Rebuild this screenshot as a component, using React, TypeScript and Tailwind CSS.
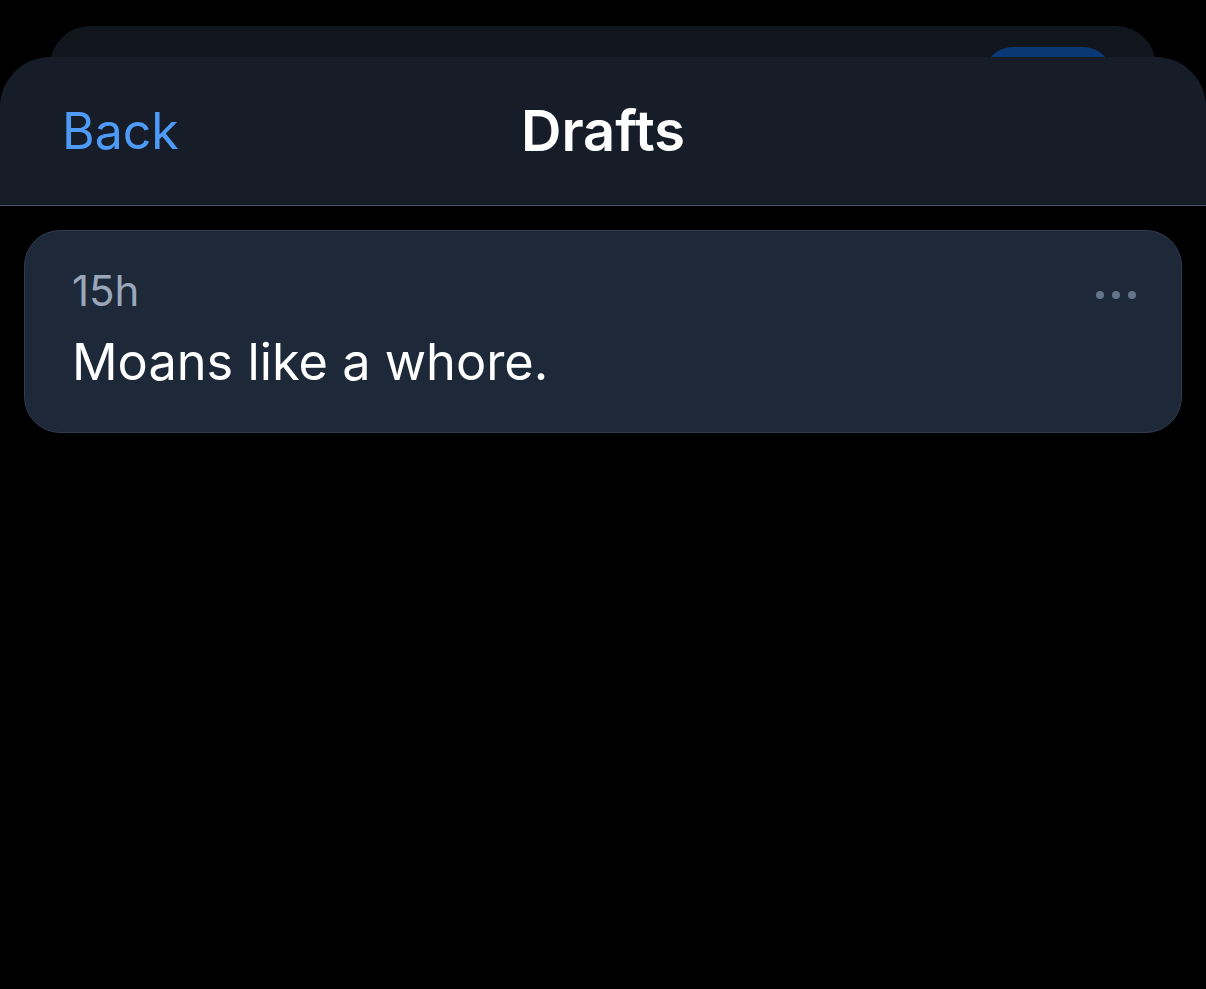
import React from "react";

function DotsIcon() {
  return (
    <svg width="42" height="10" viewBox="0 0 42 10" className="text-[#64748b]">
      <circle cx="5" cy="5" r="4" fill="currentColor" />
      <circle cx="21" cy="5" r="4" fill="currentColor" />
      <circle cx="37" cy="5" r="4" fill="currentColor" />
    </svg>
  );
}

function DraftCard({ age, text }: { age: string; text: string }) {
  return (
    <div className="rounded-[36px] border border-[#2f3b4e] bg-[#1d2839] pl-[47px] pr-[44px] pt-[35px] pb-[39px]">
      <div className="flex items-center justify-between">
        <span className="text-[42px] leading-[50px] text-[#9aa7ba]">{age}</span>
        <span className="mt-[8px]">
          <DotsIcon />
        </span>
      </div>
      <p className="mt-[15px] text-[50.5px] leading-[62px] text-white">{text}</p>
    </div>
  );
}

export default function App() {
  return (
    <div
      className="min-h-[989px] overflow-hidden bg-black"
      style={{ fontFamily: "Inter, 'Noto Sans', sans-serif" }}
    >
      <div className="pt-[26px]">
        {/* sheet behind */}
        <div className="mx-[50px] flex h-[60px] justify-end rounded-t-[40px] bg-[#10151e] pr-[43px] pt-[21px]">
          <div className="h-[60px] w-[130px] rounded-full bg-[#0b3874]" />
        </div>

        {/* drafts sheet */}
        <div className="relative -mt-[29px] rounded-t-[50px] bg-[#161c28]">
          <div className="grid h-[149px] grid-cols-[1fr_auto_1fr] items-center border-b border-[#485263] px-[62px]">
            <button className="justify-self-start text-[50px] font-normal text-[#4d9bf7]">
              Back
            </button>
            <h1 className="text-[56px] font-semibold text-white">Drafts</h1>
            <div />
          </div>
        </div>

        <div className="bg-black px-[24px] pt-[24px]">
          <DraftCard age="15h" text="Moans like a whore." />
        </div>
      </div>
    </div>
  );
}
